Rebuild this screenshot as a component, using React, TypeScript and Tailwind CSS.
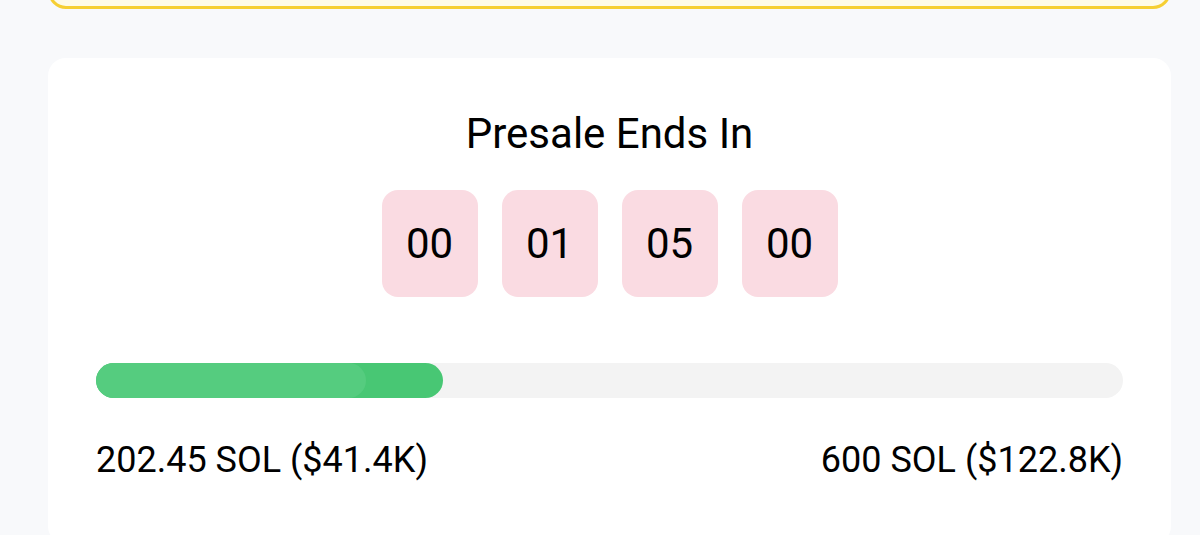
const TIME_PARTS = ['00', '01', '05', '00']

export default function App() {
  return (
    <div className="min-h-screen overflow-hidden bg-[#f8f9fb] pl-12 pr-[29px] font-['Roboto',sans-serif] text-black">
      {/* Bottom edge of the notice box above, scrolled off screen */}
      <div className="-mt-[52px] h-[61px] rounded-[18px] border-[3px] border-[#f6cf33] bg-[#fefbe8]" />

      <div className="mt-[49px] rounded-[18px] bg-white px-12 pt-[51px] pb-16">
        <h2 className="text-center text-[42px] leading-[50px] font-normal">Presale Ends In</h2>

        <div className="mt-[31px] flex justify-center gap-6">
          {TIME_PARTS.map((part, index) => (
            <div
              key={index}
              className="flex h-[107px] w-[96px] items-center justify-center rounded-[16px] bg-[#fadbe2] text-[42px]"
            >
              {part}
            </div>
          ))}
        </div>

        <div className="mt-[66px] h-[35px] w-full rounded-full bg-[#f3f3f3]">
          <div className="relative h-full w-[33.75%] overflow-hidden rounded-full bg-[#48c774]">
            <div className="h-full w-[78%] rounded-full bg-[#55cc7f]" />
          </div>
        </div>

        <div className="mt-[42px] flex justify-between text-[36px] leading-[40px]">
          <span>202.45 SOL ($41.4K)</span>
          <span>600 SOL ($122.8K)</span>
        </div>
      </div>
    </div>
  )
}
